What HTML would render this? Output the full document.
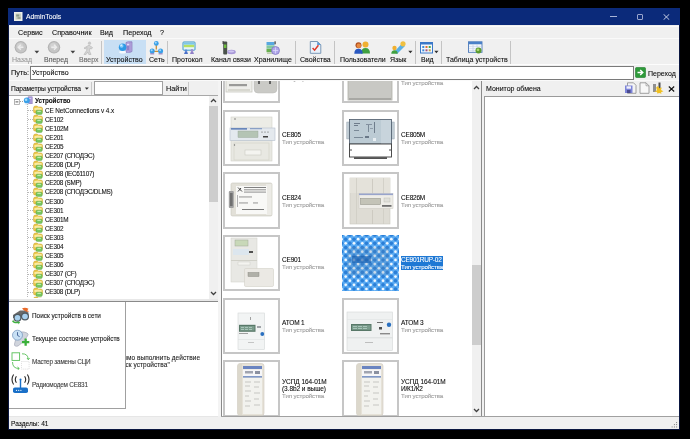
<!DOCTYPE html>
<html><head><meta charset="utf-8">
<style>
*{box-sizing:border-box}
html,body{margin:0;padding:0;width:690px;height:439px;overflow:hidden;background:#000;font-family:"Liberation Sans",sans-serif;color:#1a1a1a}
.a{position:absolute;display:block}
.t{position:absolute;white-space:nowrap;will-change:transform;-webkit-text-stroke:0.08px currentColor}
</style></head><body>
<div class="a" style="left:8px;top:8px;width:672px;height:422px;background:#0a1640;"></div>
<div class="a" style="left:8px;top:8px;width:672px;height:17px;background:#0b2a7a;"></div>
<div class="a" style="left:9px;top:25px;width:670px;height:404px;background:#f0f0f0;"></div>
<svg class="a" style="left:14px;top:12px" width="9" height="9" viewBox="0 0 9 9"><rect x="0" y="0" width="8.5" height="9" fill="#eef0ea"/><rect x="1.5" y="1.5" width="5.5" height="6" fill="#c8d0c0"/><rect x="2.2" y="2.5" width="3" height="2" fill="#8a9a88"/><rect x="3.5" y="5" width="3" height="2" fill="#a0a898"/></svg>
<div class="t" style="left:25.8px;top:14.14px;font-size:6.8px;line-height:6.8px;color:#ffffff;">AdminTools</div>
<div class="a" style="left:610px;top:16px;width:7px;height:1px;background:#a8b4d8;"></div>
<div class="a" style="left:636px;top:13px;width:7px;height:7px;border:1px solid #98a4cc;border-radius:1px;width:6px;height:6px;left:636.5px;top:13.5px"></div>
<svg class="a" style="left:662.5px;top:13.5px" width="7" height="6" viewBox="0 0 7 6"><path d="M0.5 0.2L6.3 5.8M6.3 0.2L0.5 5.8" stroke="#d8def0" stroke-width="0.9"/></svg>
<div class="a" style="left:9px;top:26px;width:670px;height:1px;background:#fbfbfb;"></div>
<div class="t" style="left:17.6px;top:28.91px;font-size:7.2px;line-height:7.2px;color:#080808;">Сервис</div>
<div class="t" style="left:51.5px;top:28.91px;font-size:7.2px;line-height:7.2px;color:#080808;">Справочник</div>
<div class="t" style="left:100.4px;top:28.91px;font-size:7.2px;line-height:7.2px;color:#080808;">Вид</div>
<div class="t" style="left:122.5px;top:28.91px;font-size:7.2px;line-height:7.2px;color:#080808;">Переход</div>
<div class="t" style="left:160.3px;top:28.91px;font-size:7.2px;line-height:7.2px;color:#080808;">?</div>
<div class="a" style="left:9px;top:38px;width:670px;height:1px;background:#fafafa;"></div>
<div class="a" style="left:9px;top:64px;width:670px;height:1px;background:#fdfdfd;"></div>
<div class="a" style="left:104px;top:40px;width:42px;height:24px;background:#c8dff4;"></div>
<div class="a" style="left:101px;top:41px;width:1px;height:23px;background:#c4c4c4;"></div>
<div class="a" style="left:167px;top:41px;width:1px;height:23px;background:#c4c4c4;"></div>
<div class="a" style="left:295px;top:41px;width:1px;height:23px;background:#c4c4c4;"></div>
<div class="a" style="left:334px;top:41px;width:1px;height:23px;background:#c4c4c4;"></div>
<div class="a" style="left:415px;top:41px;width:1px;height:23px;background:#c4c4c4;"></div>
<div class="a" style="left:441px;top:41px;width:1px;height:23px;background:#c4c4c4;"></div>
<div class="a" style="left:510px;top:41px;width:1px;height:23px;background:#c4c4c4;"></div>
<div class="t" style="left:12.4px;top:55.87px;font-size:7.0px;line-height:7.0px;color:#9a9a9a;">Назад</div>
<div class="t" style="left:43.8px;top:55.87px;font-size:7.0px;line-height:7.0px;color:#5a5a5a;">Вперед</div>
<div class="t" style="left:78.6px;top:55.87px;font-size:7.0px;line-height:7.0px;color:#6a6a6a;">Вверх</div>
<div class="t" style="left:106.1px;top:55.87px;font-size:7.0px;line-height:7.0px;color:#0a0a0a;">Устройство</div>
<div class="t" style="left:148.8px;top:55.87px;font-size:7.0px;line-height:7.0px;color:#0a0a0a;">Сеть</div>
<div class="t" style="left:172.4px;top:55.87px;font-size:7.0px;line-height:7.0px;color:#0a0a0a;">Протокол</div>
<div class="t" style="left:210.5px;top:55.87px;font-size:7.0px;line-height:7.0px;color:#0a0a0a;">Канал связи</div>
<div class="t" style="left:253.5px;top:55.87px;font-size:7.0px;line-height:7.0px;color:#0a0a0a;">Хранилище</div>
<div class="t" style="left:300.3px;top:55.87px;font-size:7.0px;line-height:7.0px;color:#0a0a0a;">Свойства</div>
<div class="t" style="left:339.5px;top:55.87px;font-size:7.0px;line-height:7.0px;color:#0a0a0a;">Пользователи</div>
<div class="t" style="left:389.6px;top:55.87px;font-size:7.0px;line-height:7.0px;color:#0a0a0a;">Язык</div>
<div class="t" style="left:420.8px;top:55.87px;font-size:7.0px;line-height:7.0px;color:#0a0a0a;">Вид</div>
<div class="t" style="left:446.3px;top:55.87px;font-size:7.0px;line-height:7.0px;color:#0a0a0a;">Таблица устройств</div>
<svg class="a" style="left:14px;top:41px" width="14" height="13" viewBox="0 0 14 13"><circle cx="6.8" cy="6.3" r="6.2" fill="#b2b2b2"/><circle cx="6.8" cy="6.3" r="5.2" fill="#c6c6c6"/><circle cx="6" cy="5" r="3" fill="#d2d2d2"/><path d="M9.5 6.3H4.5M6.8 3.8L4.3 6.3L6.8 8.8" stroke="#ececec" stroke-width="1.4" fill="none"/></svg>
<svg class="a" style="left:47px;top:41px" width="14" height="13" viewBox="0 0 14 13"><circle cx="7" cy="6.3" r="6.2" fill="#b2b2b2"/><circle cx="7" cy="6.3" r="5.2" fill="#c6c6c6"/><circle cx="6.2" cy="5" r="3" fill="#d2d2d2"/><path d="M4.3 6.3H9.3M7 3.8L9.5 6.3L7 8.8" stroke="#ececec" stroke-width="1.4" fill="none"/></svg>
<svg class="a" style="left:34px;top:50px" width="6" height="4" viewBox="0 0 6 4"><path d="M0.5 0.8H5.2L2.85 3.4Z" fill="#404040"/></svg>
<svg class="a" style="left:70px;top:50px" width="6" height="4" viewBox="0 0 6 4"><path d="M0.5 0.8H5.2L2.85 3.4Z" fill="#404040"/></svg>
<svg class="a" style="left:82px;top:41px" width="12" height="14" viewBox="0 0 12 14"><circle cx="7.5" cy="2.2" r="1.6" fill="#c8c8c8"/><path d="M7 4.2L10.5 6.5L9.5 8L8 7.2L7.5 10L9 13.5H6.8L5.8 11L4 13.5H2L4.6 9.5L5 6.5L3 8L2 7Z" fill="#d4d4d4" stroke="#b4b4b4" stroke-width="0.6"/></svg>
<svg class="a" style="left:118px;top:41px" width="16" height="14" viewBox="0 0 16 14"><path d="M8 1.5L10 0.8H14V10.5L12 11.3H8Z" fill="#b8a8e0" stroke="#7a6ab0" stroke-width="0.6"/><path d="M12 0.8V11.3" stroke="#8a7ac0" stroke-width="0.5"/><rect x="9" y="3" width="2.2" height="0.9" fill="#e8e0fa"/><rect x="9" y="5" width="2.2" height="4.5" fill="#9080c8"/><ellipse cx="4.6" cy="11.2" rx="3.4" ry="1.4" fill="#f4f8fc"/><circle cx="4.6" cy="6.2" r="3.8" fill="#2e9ae6"/><circle cx="3.6" cy="4.8" r="1.9" fill="#8cd0fa"/><circle cx="3.2" cy="4.3" r="0.8" fill="#e8f6ff"/></svg>
<svg class="a" style="left:149px;top:40px" width="15" height="15" viewBox="0 0 15 15"><path d="M7.3 4V9.5M3 11.3H11.8" stroke="#c89038" stroke-width="1.3"/><circle cx="7.3" cy="3.4" r="2.4" fill="#3aa0e8"/><circle cx="6.8" cy="2.8" r="1" fill="#a0d8fa"/><circle cx="3.2" cy="11" r="2.5" fill="#3aa0e8"/><circle cx="2.7" cy="10.3" r="1" fill="#a0d8fa"/><circle cx="11.6" cy="11" r="2.5" fill="#3aa0e8"/><circle cx="11.1" cy="10.3" r="1" fill="#a0d8fa"/><rect x="1.2" y="13.2" width="4" height="1.2" fill="#9080c0"/><rect x="9.6" y="13.2" width="4" height="1.2" fill="#9080c0"/></svg>
<svg class="a" style="left:182px;top:41px" width="14" height="13" viewBox="0 0 14 13"><rect x="1" y="1" width="12" height="8.2" rx="0.8" fill="#e6f4f8" stroke="#3a98c8" stroke-width="1"/><rect x="1.8" y="3.6" width="10.4" height="2.6" fill="#b8e060"/><rect x="1.8" y="1.8" width="10.4" height="1.8" fill="#7cc8e8"/><circle cx="4" cy="9.8" r="1.3" fill="#5a88d8"/><path d="M2 13L3 10.8H5.2L6 13Z" fill="#4a70c8"/><circle cx="10" cy="9.2" r="1.3" fill="#a090d0"/><path d="M8 13L9 10.3H11L12 13Z" fill="#9080c8"/></svg>
<svg class="a" style="left:222px;top:41px" width="14" height="14" viewBox="0 0 14 14"><rect x="1.2" y="0.4" width="4" height="13" rx="1" fill="#4a524a"/><rect x="0.6" y="0" width="1" height="3" fill="#303030"/><rect x="2" y="3.5" width="2.4" height="3.5" fill="#70c040"/><ellipse cx="9.5" cy="11" rx="4.3" ry="2.2" fill="#a898d8"/><ellipse cx="9.2" cy="10.5" rx="3" ry="1.1" fill="#d0c8f0"/></svg>
<svg class="a" style="left:266px;top:41px" width="14" height="14" viewBox="0 0 14 14"><rect x="0.5" y="1" width="8" height="3.2" fill="#58a8e0"/><rect x="0.5" y="4.4" width="8" height="3.2" fill="#80c8a0"/><rect x="0.5" y="7.8" width="8" height="3.4" fill="#6ab050"/><rect x="1" y="11.4" width="7" height="1.6" fill="#c0d0b0"/><circle cx="9.5" cy="9.5" r="4" fill="#b0a8e8" stroke="#7c70c0" stroke-width="0.7"/><path d="M9.5 6.5V12.5M7 9.5H12" stroke="#e4e0ff" stroke-width="0.7"/><rect x="8.5" y="0.3" width="1.2" height="3" fill="#404040"/></svg>
<svg class="a" style="left:309px;top:41px" width="13" height="13" viewBox="0 0 13 13"><path d="M1.3 0.5H8.5L11.8 3.8V12.3H1.3Z" fill="#eaf2fb" stroke="#6e8eb0" stroke-width="0.9"/><path d="M8.2 0.5V4.1H11.8Z" fill="#5a9ad8"/><path d="M3.6 7L5.6 9.2L9.4 4.2" stroke="#e03a2a" stroke-width="1.5" fill="none"/></svg>
<svg class="a" style="left:354px;top:41px" width="16" height="13" viewBox="0 0 16 13"><circle cx="11.5" cy="3.5" r="3" fill="#f0b030"/><path d="M7 12.5Q7 7 11.5 7Q16 7 16 12.5Z" fill="#40a040"/><circle cx="4.5" cy="4.2" r="3" fill="#b05020"/><circle cx="4.8" cy="4.8" r="2.2" fill="#e88a40"/><path d="M0.3 12.8Q0.3 7.8 4.5 7.8Q8.7 7.8 8.7 12.8Z" fill="#2a58c0"/></svg>
<svg class="a" style="left:391px;top:41px" width="15" height="13" viewBox="0 0 15 13"><path d="M3 11L11 2.5L14 5L6 13Z" fill="#58b0e8"/><circle cx="12" cy="2.8" r="2.6" fill="#f0c040"/><circle cx="3.5" cy="7" r="2.2" fill="#f0b030"/><path d="M0.3 12.8Q0.3 9.2 3.5 9.2Q6.7 9.2 6.7 12.8Z" fill="#40a040"/></svg>
<svg class="a" style="left:408px;top:50px" width="5" height="4" viewBox="0 0 5 4"><path d="M0.3 0.8H4.5L2.4 3.2Z" fill="#303030"/></svg>
<svg class="a" style="left:420px;top:42px" width="13" height="12" viewBox="0 0 13 12"><rect x="0.5" y="0.5" width="12" height="10.5" fill="#f4f8fc" stroke="#3a78c8" stroke-width="1"/><rect x="0.5" y="0.5" width="12" height="2" fill="#3a78c8"/><rect x="2.3" y="4" width="2" height="2" fill="#3a8ad8"/><rect x="5.5" y="4" width="2" height="2" fill="#e07030"/><rect x="8.7" y="4" width="2" height="2" fill="#40a848"/><rect x="2.3" y="7.3" width="2" height="2" fill="#3a8ad8"/><rect x="5.5" y="7.3" width="2" height="2" fill="#a05080"/><rect x="8.7" y="7.3" width="2" height="2" fill="#c0a040"/></svg>
<svg class="a" style="left:434px;top:50px" width="5" height="4" viewBox="0 0 5 4"><path d="M0.3 0.8H4.5L2.4 3.2Z" fill="#303030"/></svg>
<svg class="a" style="left:468px;top:41px" width="15" height="13" viewBox="0 0 15 13"><rect x="0.5" y="0.8" width="13.5" height="10.5" fill="#fafcff" stroke="#4a78b8" stroke-width="0.9"/><rect x="0.5" y="0.8" width="13.5" height="2.5" fill="#4a80c8"/><path d="M1 5.3H13.5M1 7.3H13.5M1 9.3H13.5M5 3.3V11M9 3.3V11" stroke="#b8c8e0" stroke-width="0.6"/><circle cx="10.5" cy="9.5" r="3" fill="#5a9a30"/><circle cx="10" cy="8.8" r="1.4" fill="#b0d870"/></svg>
<div class="t" style="left:10.9px;top:68.72px;font-size:7.3px;line-height:7.3px;color:#080808;">Путь:</div>
<div class="a" style="left:30px;top:66px;width:604px;height:14px;background:#fff;border:1px solid #7a7a7a"></div>
<div class="t" style="left:32.2px;top:69.07px;font-size:7.0px;line-height:7.0px;color:#080808;">Устройство</div>
<svg class="a" style="left:635px;top:67px" width="11" height="11" viewBox="0 0 11 11"><rect x="0.5" y="0.5" width="10" height="10" rx="1" fill="#2e9a3a" stroke="#1e7a2a" stroke-width="0.6"/><path d="M2.5 5.5H7.5M5.2 3L7.8 5.5L5.2 8" stroke="#fff" stroke-width="1.4" fill="none"/></svg>
<div class="t" style="left:648.2px;top:69.57px;font-size:7.0px;line-height:7.0px;color:#080808;">Переход</div>
<div class="a" style="left:9px;top:80px;width:670px;height:1px;background:#fafafa;"></div>
<div class="a" style="left:9px;top:81px;width:210px;height:14px;background:#f0f0f0;"></div>
<div class="a" style="left:9px;top:95px;width:210px;height:1px;background:#a8a8a8;"></div>
<div class="t" style="left:11.4px;top:85.93px;font-size:6.7px;line-height:6.7px;color:#080808;letter-spacing:-0.1px">Параметры устройства</div>
<svg class="a" style="left:84px;top:87px" width="6" height="4" viewBox="0 0 6 4"><path d="M0.8 0.6H4.8L2.8 2.8Z" fill="#303030"/></svg>
<div class="a" style="left:91px;top:82px;width:1px;height:13px;background:#c8c8c8;"></div>
<div class="a" style="left:94px;top:81px;width:69px;height:14px;background:#fff;border:1px solid #a0a0a0"></div>
<div class="t" style="left:165.6px;top:85.12px;font-size:7.3px;line-height:7.3px;color:#080808;">Найти</div>
<div class="a" style="left:188px;top:82px;width:1px;height:13px;background:#c8c8c8;"></div>
<div class="a" style="left:9px;top:96px;width:209px;height:204px;background:#ffffff;"></div>
<div class="a" style="left:209px;top:96px;width:9px;height:204px;background:#f0f0f0;"></div>
<div class="a" style="left:209px;top:106px;width:9px;height:96px;background:#cdcdcd;"></div>
<svg class="a" style="left:210px;top:98px" width="7" height="5" viewBox="0 0 7 5"><path d="M1 4L3.5 1.5L6 4" stroke="#404040" stroke-width="1.25" fill="none"/></svg>
<svg class="a" style="left:210px;top:291px" width="7" height="5" viewBox="0 0 7 5"><path d="M1 1L3.5 3.5L6 1" stroke="#404040" stroke-width="1.25" fill="none"/></svg>
<div class="a" style="left:9px;top:299px;width:209px;height:2px;background:#e8e8e8;"></div>
<div class="a" style="left:9px;top:301px;width:209px;height:1px;background:#8a8a8a;"></div>
<div class="a" style="left:9px;top:302px;width:209px;height:114px;background:#ffffff;"></div>
<div class="a" style="left:218px;top:81px;width:3px;height:335px;background:#f4f4f4;"></div>
<div class="a" style="left:221px;top:81px;width:1px;height:335px;background:#8a8a8a;"></div>
<div class="a" style="left:9px;top:96px;width:200px;height:202px;overflow:hidden">
<svg class="a" style="left:5px;top:2.5px" width="6" height="6"><rect x="0.45" y="0.45" width="4.9" height="4.9" fill="#fff" stroke="#a0a0a0" stroke-width="0.8"/><path d="M1.5 2.9H4.3" stroke="#303030" stroke-width="0.8"/></svg>
<div class="a" style="left:10.5px;top:5px;width:3px;height:1px;border-top:1px dotted #a0a0a0"></div>
<svg class="a" style="left:14px;top:0px" width="10" height="9"><rect x="5" y="0.8" width="4.2" height="7" fill="#a898d8" stroke="#7a6ab0" stroke-width="0.4"/><rect x="6" y="2" width="2.2" height="0.8" fill="#e0d8f8"/><circle cx="3.8" cy="4.6" r="3" fill="#3aa0e8"/><circle cx="3.1" cy="3.7" r="1.3" fill="#a8dcfa"/><ellipse cx="3.8" cy="8.1" rx="2.4" ry="0.8" fill="#d8e8f4"/></svg>
<div class="t" style="left:25.60px;top:2.08px;font-size:6.4px;line-height:6.4px;color:#101010;font-weight:bold;letter-spacing:-0.1px">Устройство</div>
<div class="a" style="left:18px;top:8px;width:1px;height:200px;background:repeating-linear-gradient(#b8b8b8 0 1px,transparent 1px 2px)"></div>
<div class="a" style="left:19px;top:14px;width:5px;height:1px;background:repeating-linear-gradient(90deg,#b8b8b8 0 1px,transparent 1px 2px)"></div>
<svg class="a" style="left:24px;top:9.30px" width="10" height="10"><path d="M0.5 3Q0.5 1 2.5 1H4.2L5.2 2H7.8Q9.6 2 9.6 4V6.5Q9.6 8 8 8H2Q0.5 8 0.5 6.5Z" fill="#ecc848" stroke="#c8a030" stroke-width="0.5"/><ellipse cx="5" cy="4" rx="3.8" ry="1.5" fill="#faeaa0"/><path d="M3 6.2Q3 5.2 4 5.2H8.2Q9.2 5.2 9.2 6.2V8.2Q9.2 9.4 8 9.4H4.2Q3 9.4 3 8.2Z" fill="#78c860" stroke="#58a040" stroke-width="0.4"/><ellipse cx="6.1" cy="6.4" rx="2" ry="0.7" fill="#c0ecb0"/></svg>
<div class="t" style="left:36.10px;top:11.68px;font-size:6.4px;line-height:6.4px;color:#101010;letter-spacing:-0.1px">CE NetConnections v 4.x</div>
<div class="a" style="left:19px;top:23px;width:5px;height:1px;background:repeating-linear-gradient(90deg,#b8b8b8 0 1px,transparent 1px 2px)"></div>
<svg class="a" style="left:24px;top:18.38px" width="10" height="10"><path d="M0.5 3Q0.5 1 2.5 1H4.2L5.2 2H7.8Q9.6 2 9.6 4V6.5Q9.6 8 8 8H2Q0.5 8 0.5 6.5Z" fill="#ecc848" stroke="#c8a030" stroke-width="0.5"/><ellipse cx="5" cy="4" rx="3.8" ry="1.5" fill="#faeaa0"/><path d="M3 6.2Q3 5.2 4 5.2H8.2Q9.2 5.2 9.2 6.2V8.2Q9.2 9.4 8 9.4H4.2Q3 9.4 3 8.2Z" fill="#78c860" stroke="#58a040" stroke-width="0.4"/><ellipse cx="6.1" cy="6.4" rx="2" ry="0.7" fill="#c0ecb0"/></svg>
<div class="t" style="left:36.10px;top:20.77px;font-size:6.4px;line-height:6.4px;color:#101010;letter-spacing:-0.25px">CE102</div>
<div class="a" style="left:19px;top:32px;width:5px;height:1px;background:repeating-linear-gradient(90deg,#b8b8b8 0 1px,transparent 1px 2px)"></div>
<svg class="a" style="left:24px;top:27.47px" width="10" height="10"><path d="M0.5 3Q0.5 1 2.5 1H4.2L5.2 2H7.8Q9.6 2 9.6 4V6.5Q9.6 8 8 8H2Q0.5 8 0.5 6.5Z" fill="#ecc848" stroke="#c8a030" stroke-width="0.5"/><ellipse cx="5" cy="4" rx="3.8" ry="1.5" fill="#faeaa0"/><path d="M3 6.2Q3 5.2 4 5.2H8.2Q9.2 5.2 9.2 6.2V8.2Q9.2 9.4 8 9.4H4.2Q3 9.4 3 8.2Z" fill="#78c860" stroke="#58a040" stroke-width="0.4"/><ellipse cx="6.1" cy="6.4" rx="2" ry="0.7" fill="#c0ecb0"/></svg>
<div class="t" style="left:36.10px;top:29.85px;font-size:6.4px;line-height:6.4px;color:#101010;letter-spacing:-0.25px">CE102M</div>
<div class="a" style="left:19px;top:42px;width:5px;height:1px;background:repeating-linear-gradient(90deg,#b8b8b8 0 1px,transparent 1px 2px)"></div>
<svg class="a" style="left:24px;top:36.56px" width="10" height="10"><path d="M0.5 3Q0.5 1 2.5 1H4.2L5.2 2H7.8Q9.6 2 9.6 4V6.5Q9.6 8 8 8H2Q0.5 8 0.5 6.5Z" fill="#ecc848" stroke="#c8a030" stroke-width="0.5"/><ellipse cx="5" cy="4" rx="3.8" ry="1.5" fill="#faeaa0"/><path d="M3 6.2Q3 5.2 4 5.2H8.2Q9.2 5.2 9.2 6.2V8.2Q9.2 9.4 8 9.4H4.2Q3 9.4 3 8.2Z" fill="#78c860" stroke="#58a040" stroke-width="0.4"/><ellipse cx="6.1" cy="6.4" rx="2" ry="0.7" fill="#c0ecb0"/></svg>
<div class="t" style="left:36.10px;top:38.94px;font-size:6.4px;line-height:6.4px;color:#101010;letter-spacing:-0.25px">CE201</div>
<div class="a" style="left:19px;top:51px;width:5px;height:1px;background:repeating-linear-gradient(90deg,#b8b8b8 0 1px,transparent 1px 2px)"></div>
<svg class="a" style="left:24px;top:45.64px" width="10" height="10"><path d="M0.5 3Q0.5 1 2.5 1H4.2L5.2 2H7.8Q9.6 2 9.6 4V6.5Q9.6 8 8 8H2Q0.5 8 0.5 6.5Z" fill="#ecc848" stroke="#c8a030" stroke-width="0.5"/><ellipse cx="5" cy="4" rx="3.8" ry="1.5" fill="#faeaa0"/><path d="M3 6.2Q3 5.2 4 5.2H8.2Q9.2 5.2 9.2 6.2V8.2Q9.2 9.4 8 9.4H4.2Q3 9.4 3 8.2Z" fill="#78c860" stroke="#58a040" stroke-width="0.4"/><ellipse cx="6.1" cy="6.4" rx="2" ry="0.7" fill="#c0ecb0"/></svg>
<div class="t" style="left:36.10px;top:48.02px;font-size:6.4px;line-height:6.4px;color:#101010;letter-spacing:-0.25px">CE205</div>
<div class="a" style="left:19px;top:60px;width:5px;height:1px;background:repeating-linear-gradient(90deg,#b8b8b8 0 1px,transparent 1px 2px)"></div>
<svg class="a" style="left:24px;top:54.72px" width="10" height="10"><path d="M0.5 3Q0.5 1 2.5 1H4.2L5.2 2H7.8Q9.6 2 9.6 4V6.5Q9.6 8 8 8H2Q0.5 8 0.5 6.5Z" fill="#ecc848" stroke="#c8a030" stroke-width="0.5"/><ellipse cx="5" cy="4" rx="3.8" ry="1.5" fill="#faeaa0"/><path d="M3 6.2Q3 5.2 4 5.2H8.2Q9.2 5.2 9.2 6.2V8.2Q9.2 9.4 8 9.4H4.2Q3 9.4 3 8.2Z" fill="#78c860" stroke="#58a040" stroke-width="0.4"/><ellipse cx="6.1" cy="6.4" rx="2" ry="0.7" fill="#c0ecb0"/></svg>
<div class="t" style="left:36.10px;top:57.11px;font-size:6.4px;line-height:6.4px;color:#101010;letter-spacing:-0.28px">CE207 (СПОДЭС)</div>
<div class="a" style="left:19px;top:69px;width:5px;height:1px;background:repeating-linear-gradient(90deg,#b8b8b8 0 1px,transparent 1px 2px)"></div>
<svg class="a" style="left:24px;top:63.81px" width="10" height="10"><path d="M0.5 3Q0.5 1 2.5 1H4.2L5.2 2H7.8Q9.6 2 9.6 4V6.5Q9.6 8 8 8H2Q0.5 8 0.5 6.5Z" fill="#ecc848" stroke="#c8a030" stroke-width="0.5"/><ellipse cx="5" cy="4" rx="3.8" ry="1.5" fill="#faeaa0"/><path d="M3 6.2Q3 5.2 4 5.2H8.2Q9.2 5.2 9.2 6.2V8.2Q9.2 9.4 8 9.4H4.2Q3 9.4 3 8.2Z" fill="#78c860" stroke="#58a040" stroke-width="0.4"/><ellipse cx="6.1" cy="6.4" rx="2" ry="0.7" fill="#c0ecb0"/></svg>
<div class="t" style="left:36.10px;top:66.19px;font-size:6.4px;line-height:6.4px;color:#101010;letter-spacing:-0.28px">CE208 (DLP)</div>
<div class="a" style="left:19px;top:78px;width:5px;height:1px;background:repeating-linear-gradient(90deg,#b8b8b8 0 1px,transparent 1px 2px)"></div>
<svg class="a" style="left:24px;top:72.90px" width="10" height="10"><path d="M0.5 3Q0.5 1 2.5 1H4.2L5.2 2H7.8Q9.6 2 9.6 4V6.5Q9.6 8 8 8H2Q0.5 8 0.5 6.5Z" fill="#ecc848" stroke="#c8a030" stroke-width="0.5"/><ellipse cx="5" cy="4" rx="3.8" ry="1.5" fill="#faeaa0"/><path d="M3 6.2Q3 5.2 4 5.2H8.2Q9.2 5.2 9.2 6.2V8.2Q9.2 9.4 8 9.4H4.2Q3 9.4 3 8.2Z" fill="#78c860" stroke="#58a040" stroke-width="0.4"/><ellipse cx="6.1" cy="6.4" rx="2" ry="0.7" fill="#c0ecb0"/></svg>
<div class="t" style="left:36.10px;top:75.28px;font-size:6.4px;line-height:6.4px;color:#101010;letter-spacing:-0.28px">CE208 (IEC61107)</div>
<div class="a" style="left:19px;top:87px;width:5px;height:1px;background:repeating-linear-gradient(90deg,#b8b8b8 0 1px,transparent 1px 2px)"></div>
<svg class="a" style="left:24px;top:81.98px" width="10" height="10"><path d="M0.5 3Q0.5 1 2.5 1H4.2L5.2 2H7.8Q9.6 2 9.6 4V6.5Q9.6 8 8 8H2Q0.5 8 0.5 6.5Z" fill="#ecc848" stroke="#c8a030" stroke-width="0.5"/><ellipse cx="5" cy="4" rx="3.8" ry="1.5" fill="#faeaa0"/><path d="M3 6.2Q3 5.2 4 5.2H8.2Q9.2 5.2 9.2 6.2V8.2Q9.2 9.4 8 9.4H4.2Q3 9.4 3 8.2Z" fill="#78c860" stroke="#58a040" stroke-width="0.4"/><ellipse cx="6.1" cy="6.4" rx="2" ry="0.7" fill="#c0ecb0"/></svg>
<div class="t" style="left:36.10px;top:84.36px;font-size:6.4px;line-height:6.4px;color:#101010;letter-spacing:-0.28px">CE208 (SMP)</div>
<div class="a" style="left:19px;top:96px;width:5px;height:1px;background:repeating-linear-gradient(90deg,#b8b8b8 0 1px,transparent 1px 2px)"></div>
<svg class="a" style="left:24px;top:91.06px" width="10" height="10"><path d="M0.5 3Q0.5 1 2.5 1H4.2L5.2 2H7.8Q9.6 2 9.6 4V6.5Q9.6 8 8 8H2Q0.5 8 0.5 6.5Z" fill="#ecc848" stroke="#c8a030" stroke-width="0.5"/><ellipse cx="5" cy="4" rx="3.8" ry="1.5" fill="#faeaa0"/><path d="M3 6.2Q3 5.2 4 5.2H8.2Q9.2 5.2 9.2 6.2V8.2Q9.2 9.4 8 9.4H4.2Q3 9.4 3 8.2Z" fill="#78c860" stroke="#58a040" stroke-width="0.4"/><ellipse cx="6.1" cy="6.4" rx="2" ry="0.7" fill="#c0ecb0"/></svg>
<div class="t" style="left:36.10px;top:93.45px;font-size:6.4px;line-height:6.4px;color:#101010;letter-spacing:-0.28px">CE208 (СПОДЭС/DLMS)</div>
<div class="a" style="left:19px;top:105px;width:5px;height:1px;background:repeating-linear-gradient(90deg,#b8b8b8 0 1px,transparent 1px 2px)"></div>
<svg class="a" style="left:24px;top:100.15px" width="10" height="10"><path d="M0.5 3Q0.5 1 2.5 1H4.2L5.2 2H7.8Q9.6 2 9.6 4V6.5Q9.6 8 8 8H2Q0.5 8 0.5 6.5Z" fill="#ecc848" stroke="#c8a030" stroke-width="0.5"/><ellipse cx="5" cy="4" rx="3.8" ry="1.5" fill="#faeaa0"/><path d="M3 6.2Q3 5.2 4 5.2H8.2Q9.2 5.2 9.2 6.2V8.2Q9.2 9.4 8 9.4H4.2Q3 9.4 3 8.2Z" fill="#78c860" stroke="#58a040" stroke-width="0.4"/><ellipse cx="6.1" cy="6.4" rx="2" ry="0.7" fill="#c0ecb0"/></svg>
<div class="t" style="left:36.10px;top:102.53px;font-size:6.4px;line-height:6.4px;color:#101010;letter-spacing:-0.25px">CE300</div>
<div class="a" style="left:19px;top:114px;width:5px;height:1px;background:repeating-linear-gradient(90deg,#b8b8b8 0 1px,transparent 1px 2px)"></div>
<svg class="a" style="left:24px;top:109.24px" width="10" height="10"><path d="M0.5 3Q0.5 1 2.5 1H4.2L5.2 2H7.8Q9.6 2 9.6 4V6.5Q9.6 8 8 8H2Q0.5 8 0.5 6.5Z" fill="#ecc848" stroke="#c8a030" stroke-width="0.5"/><ellipse cx="5" cy="4" rx="3.8" ry="1.5" fill="#faeaa0"/><path d="M3 6.2Q3 5.2 4 5.2H8.2Q9.2 5.2 9.2 6.2V8.2Q9.2 9.4 8 9.4H4.2Q3 9.4 3 8.2Z" fill="#78c860" stroke="#58a040" stroke-width="0.4"/><ellipse cx="6.1" cy="6.4" rx="2" ry="0.7" fill="#c0ecb0"/></svg>
<div class="t" style="left:36.10px;top:111.62px;font-size:6.4px;line-height:6.4px;color:#101010;letter-spacing:-0.25px">CE301</div>
<div class="a" style="left:19px;top:123px;width:5px;height:1px;background:repeating-linear-gradient(90deg,#b8b8b8 0 1px,transparent 1px 2px)"></div>
<svg class="a" style="left:24px;top:118.32px" width="10" height="10"><path d="M0.5 3Q0.5 1 2.5 1H4.2L5.2 2H7.8Q9.6 2 9.6 4V6.5Q9.6 8 8 8H2Q0.5 8 0.5 6.5Z" fill="#ecc848" stroke="#c8a030" stroke-width="0.5"/><ellipse cx="5" cy="4" rx="3.8" ry="1.5" fill="#faeaa0"/><path d="M3 6.2Q3 5.2 4 5.2H8.2Q9.2 5.2 9.2 6.2V8.2Q9.2 9.4 8 9.4H4.2Q3 9.4 3 8.2Z" fill="#78c860" stroke="#58a040" stroke-width="0.4"/><ellipse cx="6.1" cy="6.4" rx="2" ry="0.7" fill="#c0ecb0"/></svg>
<div class="t" style="left:36.10px;top:120.70px;font-size:6.4px;line-height:6.4px;color:#101010;letter-spacing:-0.25px">CE301M</div>
<div class="a" style="left:19px;top:132px;width:5px;height:1px;background:repeating-linear-gradient(90deg,#b8b8b8 0 1px,transparent 1px 2px)"></div>
<svg class="a" style="left:24px;top:127.41px" width="10" height="10"><path d="M0.5 3Q0.5 1 2.5 1H4.2L5.2 2H7.8Q9.6 2 9.6 4V6.5Q9.6 8 8 8H2Q0.5 8 0.5 6.5Z" fill="#ecc848" stroke="#c8a030" stroke-width="0.5"/><ellipse cx="5" cy="4" rx="3.8" ry="1.5" fill="#faeaa0"/><path d="M3 6.2Q3 5.2 4 5.2H8.2Q9.2 5.2 9.2 6.2V8.2Q9.2 9.4 8 9.4H4.2Q3 9.4 3 8.2Z" fill="#78c860" stroke="#58a040" stroke-width="0.4"/><ellipse cx="6.1" cy="6.4" rx="2" ry="0.7" fill="#c0ecb0"/></svg>
<div class="t" style="left:36.10px;top:129.79px;font-size:6.4px;line-height:6.4px;color:#101010;letter-spacing:-0.25px">CE302</div>
<div class="a" style="left:19px;top:141px;width:5px;height:1px;background:repeating-linear-gradient(90deg,#b8b8b8 0 1px,transparent 1px 2px)"></div>
<svg class="a" style="left:24px;top:136.49px" width="10" height="10"><path d="M0.5 3Q0.5 1 2.5 1H4.2L5.2 2H7.8Q9.6 2 9.6 4V6.5Q9.6 8 8 8H2Q0.5 8 0.5 6.5Z" fill="#ecc848" stroke="#c8a030" stroke-width="0.5"/><ellipse cx="5" cy="4" rx="3.8" ry="1.5" fill="#faeaa0"/><path d="M3 6.2Q3 5.2 4 5.2H8.2Q9.2 5.2 9.2 6.2V8.2Q9.2 9.4 8 9.4H4.2Q3 9.4 3 8.2Z" fill="#78c860" stroke="#58a040" stroke-width="0.4"/><ellipse cx="6.1" cy="6.4" rx="2" ry="0.7" fill="#c0ecb0"/></svg>
<div class="t" style="left:36.10px;top:138.87px;font-size:6.4px;line-height:6.4px;color:#101010;letter-spacing:-0.25px">CE303</div>
<div class="a" style="left:19px;top:151px;width:5px;height:1px;background:repeating-linear-gradient(90deg,#b8b8b8 0 1px,transparent 1px 2px)"></div>
<svg class="a" style="left:24px;top:145.57px" width="10" height="10"><path d="M0.5 3Q0.5 1 2.5 1H4.2L5.2 2H7.8Q9.6 2 9.6 4V6.5Q9.6 8 8 8H2Q0.5 8 0.5 6.5Z" fill="#ecc848" stroke="#c8a030" stroke-width="0.5"/><ellipse cx="5" cy="4" rx="3.8" ry="1.5" fill="#faeaa0"/><path d="M3 6.2Q3 5.2 4 5.2H8.2Q9.2 5.2 9.2 6.2V8.2Q9.2 9.4 8 9.4H4.2Q3 9.4 3 8.2Z" fill="#78c860" stroke="#58a040" stroke-width="0.4"/><ellipse cx="6.1" cy="6.4" rx="2" ry="0.7" fill="#c0ecb0"/></svg>
<div class="t" style="left:36.10px;top:147.96px;font-size:6.4px;line-height:6.4px;color:#101010;letter-spacing:-0.25px">CE304</div>
<div class="a" style="left:19px;top:160px;width:5px;height:1px;background:repeating-linear-gradient(90deg,#b8b8b8 0 1px,transparent 1px 2px)"></div>
<svg class="a" style="left:24px;top:154.66px" width="10" height="10"><path d="M0.5 3Q0.5 1 2.5 1H4.2L5.2 2H7.8Q9.6 2 9.6 4V6.5Q9.6 8 8 8H2Q0.5 8 0.5 6.5Z" fill="#ecc848" stroke="#c8a030" stroke-width="0.5"/><ellipse cx="5" cy="4" rx="3.8" ry="1.5" fill="#faeaa0"/><path d="M3 6.2Q3 5.2 4 5.2H8.2Q9.2 5.2 9.2 6.2V8.2Q9.2 9.4 8 9.4H4.2Q3 9.4 3 8.2Z" fill="#78c860" stroke="#58a040" stroke-width="0.4"/><ellipse cx="6.1" cy="6.4" rx="2" ry="0.7" fill="#c0ecb0"/></svg>
<div class="t" style="left:36.10px;top:157.04px;font-size:6.4px;line-height:6.4px;color:#101010;letter-spacing:-0.25px">CE305</div>
<div class="a" style="left:19px;top:169px;width:5px;height:1px;background:repeating-linear-gradient(90deg,#b8b8b8 0 1px,transparent 1px 2px)"></div>
<svg class="a" style="left:24px;top:163.75px" width="10" height="10"><path d="M0.5 3Q0.5 1 2.5 1H4.2L5.2 2H7.8Q9.6 2 9.6 4V6.5Q9.6 8 8 8H2Q0.5 8 0.5 6.5Z" fill="#ecc848" stroke="#c8a030" stroke-width="0.5"/><ellipse cx="5" cy="4" rx="3.8" ry="1.5" fill="#faeaa0"/><path d="M3 6.2Q3 5.2 4 5.2H8.2Q9.2 5.2 9.2 6.2V8.2Q9.2 9.4 8 9.4H4.2Q3 9.4 3 8.2Z" fill="#78c860" stroke="#58a040" stroke-width="0.4"/><ellipse cx="6.1" cy="6.4" rx="2" ry="0.7" fill="#c0ecb0"/></svg>
<div class="t" style="left:36.10px;top:166.13px;font-size:6.4px;line-height:6.4px;color:#101010;letter-spacing:-0.25px">CE306</div>
<div class="a" style="left:19px;top:178px;width:5px;height:1px;background:repeating-linear-gradient(90deg,#b8b8b8 0 1px,transparent 1px 2px)"></div>
<svg class="a" style="left:24px;top:172.83px" width="10" height="10"><path d="M0.5 3Q0.5 1 2.5 1H4.2L5.2 2H7.8Q9.6 2 9.6 4V6.5Q9.6 8 8 8H2Q0.5 8 0.5 6.5Z" fill="#ecc848" stroke="#c8a030" stroke-width="0.5"/><ellipse cx="5" cy="4" rx="3.8" ry="1.5" fill="#faeaa0"/><path d="M3 6.2Q3 5.2 4 5.2H8.2Q9.2 5.2 9.2 6.2V8.2Q9.2 9.4 8 9.4H4.2Q3 9.4 3 8.2Z" fill="#78c860" stroke="#58a040" stroke-width="0.4"/><ellipse cx="6.1" cy="6.4" rx="2" ry="0.7" fill="#c0ecb0"/></svg>
<div class="t" style="left:36.10px;top:175.21px;font-size:6.4px;line-height:6.4px;color:#101010;letter-spacing:-0.28px">CE307 (CF)</div>
<div class="a" style="left:19px;top:187px;width:5px;height:1px;background:repeating-linear-gradient(90deg,#b8b8b8 0 1px,transparent 1px 2px)"></div>
<svg class="a" style="left:24px;top:181.92px" width="10" height="10"><path d="M0.5 3Q0.5 1 2.5 1H4.2L5.2 2H7.8Q9.6 2 9.6 4V6.5Q9.6 8 8 8H2Q0.5 8 0.5 6.5Z" fill="#ecc848" stroke="#c8a030" stroke-width="0.5"/><ellipse cx="5" cy="4" rx="3.8" ry="1.5" fill="#faeaa0"/><path d="M3 6.2Q3 5.2 4 5.2H8.2Q9.2 5.2 9.2 6.2V8.2Q9.2 9.4 8 9.4H4.2Q3 9.4 3 8.2Z" fill="#78c860" stroke="#58a040" stroke-width="0.4"/><ellipse cx="6.1" cy="6.4" rx="2" ry="0.7" fill="#c0ecb0"/></svg>
<div class="t" style="left:36.10px;top:184.30px;font-size:6.4px;line-height:6.4px;color:#101010;letter-spacing:-0.28px">CE307 (СПОДЭС)</div>
<div class="a" style="left:19px;top:196px;width:5px;height:1px;background:repeating-linear-gradient(90deg,#b8b8b8 0 1px,transparent 1px 2px)"></div>
<svg class="a" style="left:24px;top:191.00px" width="10" height="10"><path d="M0.5 3Q0.5 1 2.5 1H4.2L5.2 2H7.8Q9.6 2 9.6 4V6.5Q9.6 8 8 8H2Q0.5 8 0.5 6.5Z" fill="#ecc848" stroke="#c8a030" stroke-width="0.5"/><ellipse cx="5" cy="4" rx="3.8" ry="1.5" fill="#faeaa0"/><path d="M3 6.2Q3 5.2 4 5.2H8.2Q9.2 5.2 9.2 6.2V8.2Q9.2 9.4 8 9.4H4.2Q3 9.4 3 8.2Z" fill="#78c860" stroke="#58a040" stroke-width="0.4"/><ellipse cx="6.1" cy="6.4" rx="2" ry="0.7" fill="#c0ecb0"/></svg>
<div class="t" style="left:36.10px;top:193.38px;font-size:6.4px;line-height:6.4px;color:#101010;letter-spacing:-0.28px">CE308 (DLP)</div>
<div class="a" style="left:19px;top:205px;width:5px;height:1px;background:repeating-linear-gradient(90deg,#b8b8b8 0 1px,transparent 1px 2px)"></div>
<svg class="a" style="left:24px;top:200.09px" width="10" height="10"><path d="M0.5 3Q0.5 1 2.5 1H4.2L5.2 2H7.8Q9.6 2 9.6 4V6.5Q9.6 8 8 8H2Q0.5 8 0.5 6.5Z" fill="#ecc848" stroke="#c8a030" stroke-width="0.5"/><ellipse cx="5" cy="4" rx="3.8" ry="1.5" fill="#faeaa0"/><path d="M3 6.2Q3 5.2 4 5.2H8.2Q9.2 5.2 9.2 6.2V8.2Q9.2 9.4 8 9.4H4.2Q3 9.4 3 8.2Z" fill="#78c860" stroke="#58a040" stroke-width="0.4"/><ellipse cx="6.1" cy="6.4" rx="2" ry="0.7" fill="#c0ecb0"/></svg>
<div class="t" style="left:36.10px;top:202.47px;font-size:6.4px;line-height:6.4px;color:#101010;letter-spacing:-0.28px">CE308 (СПОДЭС)</div>
</div>
<div class="t" style="right:490.40px;top:354.70px;font-size:6.5px;line-height:6.5px;color:#202020;letter-spacing:0.05px">Необходимо выполнить действие</div>
<div class="t" style="right:520.00px;top:362.10px;font-size:6.5px;line-height:6.5px;color:#202020;letter-spacing:0.05px">"Поиск устройства"</div>
<div class="a" style="left:9px;top:302px;width:117px;height:107px;background:#fff;border-right:1px solid #a0a0a0;border-bottom:1px solid #a0a0a0"></div>
<div class="t" style="left:31.6px;top:313.28px;font-size:6.4px;line-height:6.4px;color:#101010;">Поиск устройств в сети</div>
<div class="t" style="left:31.6px;top:336.18px;font-size:6.4px;line-height:6.4px;color:#101010;letter-spacing:-0.05px">Текущее состояние устройств</div>
<div class="t" style="left:31.6px;top:358.88px;font-size:6.4px;line-height:6.4px;color:#3a3a3a;letter-spacing:-0.22px">Мастер замены СЦИ</div>
<div class="t" style="left:31.6px;top:382.08px;font-size:6.4px;line-height:6.4px;color:#3a3a3a;letter-spacing:-0.22px">Радиомодем CE831</div>
<svg class="a" style="left:11px;top:306px" width="19" height="19" viewBox="0 0 19 19"><path d="M11 2.5Q14 0.8 17.5 2.8L16.2 4.6L18.3 5.2L15 6.3Z" fill="#e86a2a"/><path d="M2 9L9 4.5H13L17.5 6.5V12H2Z" fill="#6a6a6a"/><circle cx="6.5" cy="11.8" r="4" fill="#505a60"/><circle cx="6.5" cy="11.8" r="2.8" fill="#a8d0ee"/><circle cx="14" cy="10.5" r="4" fill="#505a60"/><circle cx="14" cy="10.5" r="2.8" fill="#a8d0ee"/><path d="M1 15Q2 17.8 7.5 17.2L7 18.6L9.2 16.6L6.5 14.8L6.8 16Q3.5 16.5 2.5 14.2Z" fill="#40b040"/></svg>
<svg class="a" style="left:11px;top:329px" width="19" height="19" viewBox="0 0 19 19"><path d="M6 5Q8 2 13 3L16 4Q18 5 16.5 7L12 13L7 17Q3 18 3.5 15Z" fill="#d0d4dc" stroke="#9aa0b0" stroke-width="0.6"/><circle cx="6.5" cy="6.2" r="5" fill="#c8e0f4" stroke="#7a9ac0" stroke-width="0.8"/><path d="M6.5 3.2V6.4L8.6 7.6" stroke="#3a5a90" stroke-width="0.9" fill="none"/><path d="M13.5 9.5H15.8V12H18.3V14.3H15.8V16.8H13.5V14.3H11V12H13.5Z" fill="#3ab03a"/></svg>
<svg class="a" style="left:11px;top:352px" width="19" height="18" viewBox="0 0 19 18"><rect x="1" y="0.8" width="7.6" height="7.6" fill="none" stroke="#58c058" stroke-width="0.9"/><rect x="10.5" y="9.5" width="7.6" height="7.6" fill="none" stroke="#c8c8c8" stroke-width="0.6" stroke-dasharray="1 1"/><path d="M11 1.8Q16.8 1.5 17.3 7.3" stroke="#58c058" stroke-width="0.9" fill="none"/><path d="M16 6L17.3 7.8L18.6 6" stroke="#58c058" stroke-width="0.9" fill="none"/><path d="M1.5 10Q1.5 16.5 8 16.5" stroke="#58c058" stroke-width="0.9" fill="none"/><path d="M6.5 15L8.3 16.5L6.5 18" stroke="#58c058" stroke-width="0.9" fill="none"/></svg>
<svg class="a" style="left:11px;top:373px" width="19" height="21" viewBox="0 0 19 21"><path d="M2.6 1.5Q-0.6 6.5 2.6 11.5M16.4 1.5Q19.6 6.5 16.4 11.5M5.4 3.2Q3.2 6.5 5.4 9.8M13.6 3.2Q15.8 6.5 13.6 9.8" stroke="#2a2a2a" stroke-width="1.1" fill="none"/><circle cx="9.5" cy="6.5" r="1" fill="#1a70c8"/><rect x="8.8" y="6.5" width="1.4" height="8.5" fill="#1a70c8"/><rect x="2" y="14.5" width="15" height="5.5" rx="1.8" fill="#1a70c8"/><circle cx="5.5" cy="17.3" r="0.65" fill="#fff"/><circle cx="7.7" cy="17.3" r="0.65" fill="#fff"/><circle cx="9.9" cy="17.3" r="0.65" fill="#fff"/></svg>
<div class="a" style="left:222px;top:81px;width:250px;height:335px;background:#fff;overflow:hidden">
<div class="a" style="left:1.00px;top:-34.10px;width:57px;height:56.4px;background:#fff;border:2px solid #c6c6c6;"></div>
<div class="t" style="left:60.00px;top:-11.90px;font-size:6.5px;line-height:6.5px;color:#0a0a0a;letter-spacing:-0.2px">CE6850</div>
<div class="t" style="left:60.00px;top:-4.70px;font-size:6.5px;line-height:6.5px;color:#9a9a9a;letter-spacing:-0.1px;font-size:6.15px">Тип устройства</div>
<svg class="a" style="left:3.00px;top:-11.00px" width="54" height="24" viewBox="0 0 54 24"><rect x="1" y="0" width="26" height="22" fill="#eeeeea" stroke="#c8c8c0" stroke-width="0.8"/><rect x="4" y="14" width="18" height="2.2" fill="#9a9a98"/><rect x="3" y="19" width="22" height="2" fill="#d8d8d0"/><path d="M29 0H52V19Q52 23 48 23H33Q29 23 29 19Z" fill="#cacac6" stroke="#b8b8b4" stroke-width="0.5"/><rect x="33" y="11" width="2" height="3" fill="#606060"/><rect x="44" y="11" width="2" height="3" fill="#606060"/></svg>
<div class="a" style="left:120.00px;top:-34.10px;width:57px;height:56.4px;background:#fff;border:2px solid #c6c6c6;"></div>
<div class="t" style="left:179.00px;top:-15.50px;font-size:6.5px;line-height:6.5px;color:#0a0a0a;letter-spacing:-0.2px">CE805M</div>
<div class="t" style="left:179.00px;top:-8.30px;font-size:6.5px;line-height:6.5px;color:#0a0a0a;letter-spacing:-0.2px">2</div>
<div class="t" style="left:179.00px;top:-1.10px;font-size:6.5px;line-height:6.5px;color:#9a9a9a;letter-spacing:-0.1px;font-size:6.15px">Тип устройства</div>
<svg class="a" style="left:125.00px;top:-21.00px" width="46" height="41" viewBox="0 0 46 41"><rect x="1" y="0" width="44" height="40" rx="1" fill="#c8c8c4"/><rect x="1" y="0" width="44" height="40" fill="none" stroke="#b0b0a8" stroke-width="0.8"/><rect x="2" y="38" width="42" height="2" fill="#a8a8a4"/></svg>
<div class="a" style="left:1.00px;top:28.60px;width:57px;height:56.4px;background:#fff;border:2px solid #c6c6c6;"></div>
<div class="t" style="left:60.00px;top:50.80px;font-size:6.5px;line-height:6.5px;color:#0a0a0a;letter-spacing:-0.2px">CE805</div>
<div class="t" style="left:60.00px;top:58.00px;font-size:6.5px;line-height:6.5px;color:#9a9a9a;letter-spacing:-0.1px;font-size:6.15px">Тип устройства</div>
<svg class="a" style="left:7.00px;top:35.00px" width="48" height="46" viewBox="0 0 48 46"><rect x="2" y="1" width="41" height="12" fill="#ecece6" stroke="#d2d2ca" stroke-width="0.6"/><rect x="2" y="24" width="41" height="21" fill="#e8e8e2" stroke="#d0d0c8" stroke-width="0.6"/><rect x="5" y="27" width="35" height="17" fill="none" stroke="#cfcfc6" stroke-width="0.6"/><rect x="16" y="34" width="16" height="5" fill="#f4f4f0" stroke="#c2c2ba" stroke-width="0.5"/><circle cx="6" cy="3" r="0.7" fill="#606060"/><circle cx="5.5" cy="29" r="0.7" fill="#707070"/><rect x="1" y="12" width="45" height="12.5" fill="#e4e9ee" stroke="#b4bece" stroke-width="0.6"/><rect x="2" y="12.3" width="16" height="1.2" fill="#3a62a8"/><rect x="21" y="12.3" width="12" height="0.9" fill="#6a86b8"/><rect x="9" y="15" width="20" height="6.5" fill="#b4c4b4" stroke="#94a494" stroke-width="0.4"/><circle cx="33" cy="16" r="0.6" fill="#505050"/><circle cx="36" cy="16" r="0.6" fill="#505050"/><circle cx="39" cy="16" r="0.6" fill="#505050"/><rect x="34" y="20" width="5" height="1.5" fill="#404040"/></svg>
<div class="a" style="left:120.00px;top:28.60px;width:57px;height:56.4px;background:#fff;border:2px solid #c6c6c6;"></div>
<div class="t" style="left:179.00px;top:50.80px;font-size:6.5px;line-height:6.5px;color:#0a0a0a;letter-spacing:-0.2px">CE805M</div>
<div class="t" style="left:179.00px;top:58.00px;font-size:6.5px;line-height:6.5px;color:#9a9a9a;letter-spacing:-0.1px;font-size:6.15px">Тип устройства</div>
<svg class="a" style="left:124.00px;top:37.00px" width="49" height="42" viewBox="0 0 49 42"><rect x="0.8" y="4" width="3" height="17" fill="#c0ccd4" stroke="#8a98a4" stroke-width="0.4"/><rect x="45.2" y="4" width="3" height="17" fill="#c0ccd4" stroke="#8a98a4" stroke-width="0.4"/><rect x="3.5" y="1.5" width="42" height="24.5" fill="#bccbd4" stroke="#4a5868" stroke-width="0.8"/><rect x="35" y="2" width="10" height="23.5" fill="#c8d4dc"/><rect x="8" y="5" width="6" height="0.8" fill="#5a6878"/><rect x="8" y="7" width="4" height="0.8" fill="#5a6878"/><rect x="8" y="12" width="5" height="0.8" fill="#6a7888"/><rect x="8" y="19" width="9" height="0.8" fill="#6a7888"/><rect x="20" y="6" width="6" height="0.7" fill="#6a7888"/><rect x="22" y="7" width="0.8" height="7" fill="#6a7888"/><rect x="28" y="4" width="0.8" height="11" fill="#5a6878"/><rect x="24" y="10" width="3" height="0.7" fill="#7a8898"/><rect x="19" y="18" width="4" height="2" fill="#6a7888"/><rect x="27" y="20" width="3" height="3" fill="#e8eef2"/><rect x="3.5" y="26" width="42" height="13" fill="#ffffff" stroke="#3a3a3a" stroke-width="0.9"/><rect x="4.5" y="31" width="1" height="2" fill="#505050"/><rect x="43.5" y="31" width="1" height="2" fill="#505050"/><rect x="8" y="39.3" width="33" height="1.6" fill="#404040"/></svg>
<div class="a" style="left:1.00px;top:91.30px;width:57px;height:56.4px;background:#fff;border:2px solid #c6c6c6;"></div>
<div class="t" style="left:60.00px;top:113.50px;font-size:6.5px;line-height:6.5px;color:#0a0a0a;letter-spacing:-0.2px">CE824</div>
<div class="t" style="left:60.00px;top:120.70px;font-size:6.5px;line-height:6.5px;color:#9a9a9a;letter-spacing:-0.1px;font-size:6.15px">Тип устройства</div>
<svg class="a" style="left:6.00px;top:101.00px" width="46" height="36" viewBox="0 0 46 36"><rect x="3" y="1" width="41" height="33" rx="1.5" fill="#e2e0d8" stroke="#c8c6bc" stroke-width="0.6"/><rect x="38" y="2" width="5.5" height="31" fill="#ecebe6"/><rect x="0.8" y="9" width="5" height="17" rx="1" fill="#a0a0a0"/><rect x="2" y="11" width="2.6" height="13" fill="#707070"/><rect x="8" y="4" width="31" height="28" fill="#f8f8f6"/><path d="M10 5.5L14 9.5M10 9.5L13 6" stroke="#404040" stroke-width="1"/><rect x="16" y="5" width="22" height="1" fill="#808080"/><rect x="16" y="7.3" width="22" height="1" fill="#909090"/><rect x="16" y="9.6" width="22" height="1" fill="#909090"/><rect x="11" y="14.5" width="13" height="0.9" fill="#8a8a8a"/><rect x="11" y="20.5" width="9" height="0.9" fill="#8a8a8a"/><rect x="25" y="20.5" width="5" height="0.9" fill="#8a8a8a"/><rect x="9" y="13" width="1" height="12" fill="#b0b0b0"/><rect x="14" y="27" width="22" height="1" fill="#7a7a7a"/></svg>
<div class="a" style="left:120.00px;top:91.30px;width:57px;height:56.4px;background:#fff;border:2px solid #c6c6c6;"></div>
<div class="t" style="left:179.00px;top:113.50px;font-size:6.5px;line-height:6.5px;color:#0a0a0a;letter-spacing:-0.2px">CE826M</div>
<div class="t" style="left:179.00px;top:120.70px;font-size:6.5px;line-height:6.5px;color:#9a9a9a;letter-spacing:-0.1px;font-size:6.15px">Тип устройства</div>
<svg class="a" style="left:127.00px;top:96.00px" width="46" height="48" viewBox="0 0 46 48"><rect x="1" y="1" width="40" height="46" fill="#dedcd4" stroke="#cac8be" stroke-width="0.6"/><rect x="1" y="1" width="40" height="15" fill="#e4e2da"/><rect x="7" y="1" width="0.8" height="46" fill="#cfcdc4"/><rect x="23" y="2" width="0.8" height="14" fill="#c8c6bc"/><rect x="34" y="1" width="0.8" height="46" fill="#cfcdc4"/><rect x="10" y="16.5" width="34" height="15" fill="#eeede8" stroke="#cac8c0" stroke-width="0.5"/><rect x="10" y="16.5" width="34" height="1.6" fill="#98a4cc"/><rect x="11.5" y="21.5" width="20" height="6" fill="#c4c4b8" stroke="#8c8c80" stroke-width="0.5"/><rect x="33" y="28" width="9.5" height="1.8" fill="#707070"/><rect x="35" y="21" width="6" height="4" fill="#e0e0da" stroke="#b8b8b0" stroke-width="0.4"/><rect x="23" y="33" width="0.8" height="14" fill="#c8c6bc"/></svg>
<div class="a" style="left:1.00px;top:154.00px;width:57px;height:56.4px;background:#fff;border:2px solid #c6c6c6;"></div>
<div class="t" style="left:60.00px;top:176.20px;font-size:6.5px;line-height:6.5px;color:#0a0a0a;letter-spacing:-0.2px">CE901</div>
<div class="t" style="left:60.00px;top:183.40px;font-size:6.5px;line-height:6.5px;color:#9a9a9a;letter-spacing:-0.1px;font-size:6.15px">Тип устройства</div>
<svg class="a" style="left:7.00px;top:156.00px" width="46" height="51" viewBox="0 0 46 51"><rect x="2" y="1" width="26" height="44" fill="#e8e8e4" stroke="#d0d0c8" stroke-width="0.5"/><rect x="6" y="3" width="13" height="6" fill="#c8d8b8" stroke="#a0a898" stroke-width="0.5"/><rect x="4" y="12" width="16" height="6" fill="#dce6ee"/><rect x="20" y="14" width="4" height="2" fill="#505050"/><rect x="2" y="23" width="26" height="1" fill="#d0d0c8"/><rect x="9" y="25" width="12" height="3" fill="#f4f4f0" stroke="#c8c8c0" stroke-width="0.4"/><rect x="15.5" y="31.5" width="29" height="18" rx="1.2" fill="#ebe9e4" stroke="#d2d0c8" stroke-width="0.6"/><rect x="19" y="35.5" width="11" height="4" fill="#b0b0a8" stroke="#808078" stroke-width="0.4"/></svg>
<svg class="a" style="left:120px;top:154.00px" width="57" height="56"><defs><filter id="bl" x="0" y="0" width="1" height="1"><feGaussianBlur stdDeviation="0.5"/></filter><clipPath id="cp"><rect width="57" height="56"/></clipPath></defs><g clip-path="url(#cp)"><rect width="57" height="56" fill="#5aaaf2"/><g filter="url(#bl)"><circle cx="-0.45" cy="0.05" r="1.8" fill="#2a7ed6"/><circle cx="3.70" cy="0.05" r="1.35" fill="#f2f9ff"/><circle cx="7.85" cy="0.05" r="1.8" fill="#2a7ed6"/><circle cx="12.00" cy="0.05" r="1.35" fill="#f2f9ff"/><circle cx="16.15" cy="0.05" r="1.8" fill="#2a7ed6"/><circle cx="20.30" cy="0.05" r="1.35" fill="#f2f9ff"/><circle cx="24.45" cy="0.05" r="1.8" fill="#2a7ed6"/><circle cx="28.60" cy="0.05" r="1.35" fill="#f2f9ff"/><circle cx="32.75" cy="0.05" r="1.8" fill="#2a7ed6"/><circle cx="36.90" cy="0.05" r="1.35" fill="#f2f9ff"/><circle cx="41.05" cy="0.05" r="1.8" fill="#2a7ed6"/><circle cx="45.20" cy="0.05" r="1.35" fill="#f2f9ff"/><circle cx="49.35" cy="0.05" r="1.8" fill="#2a7ed6"/><circle cx="53.50" cy="0.05" r="1.35" fill="#f2f9ff"/><circle cx="57.65" cy="0.05" r="1.8" fill="#2a7ed6"/><circle cx="61.80" cy="0.05" r="1.35" fill="#f2f9ff"/><circle cx="-0.45" cy="4.20" r="1.35" fill="#f2f9ff"/><circle cx="3.70" cy="4.20" r="1.8" fill="#2a7ed6"/><circle cx="7.85" cy="4.20" r="1.35" fill="#f2f9ff"/><circle cx="12.00" cy="4.20" r="1.8" fill="#2a7ed6"/><circle cx="16.15" cy="4.20" r="1.35" fill="#f2f9ff"/><circle cx="20.30" cy="4.20" r="1.8" fill="#2a7ed6"/><circle cx="24.45" cy="4.20" r="1.35" fill="#f2f9ff"/><circle cx="28.60" cy="4.20" r="1.8" fill="#2a7ed6"/><circle cx="32.75" cy="4.20" r="1.35" fill="#f2f9ff"/><circle cx="36.90" cy="4.20" r="1.8" fill="#2a7ed6"/><circle cx="41.05" cy="4.20" r="1.35" fill="#f2f9ff"/><circle cx="45.20" cy="4.20" r="1.8" fill="#2a7ed6"/><circle cx="49.35" cy="4.20" r="1.35" fill="#f2f9ff"/><circle cx="53.50" cy="4.20" r="1.8" fill="#2a7ed6"/><circle cx="57.65" cy="4.20" r="1.35" fill="#f2f9ff"/><circle cx="61.80" cy="4.20" r="1.8" fill="#2a7ed6"/><circle cx="-0.45" cy="8.35" r="1.8" fill="#2a7ed6"/><circle cx="3.70" cy="8.35" r="1.35" fill="#f2f9ff"/><circle cx="7.85" cy="8.35" r="1.8" fill="#2a7ed6"/><circle cx="12.00" cy="8.35" r="1.35" fill="#f2f9ff"/><circle cx="16.15" cy="8.35" r="1.8" fill="#2a7ed6"/><circle cx="20.30" cy="8.35" r="1.35" fill="#f2f9ff"/><circle cx="24.45" cy="8.35" r="1.8" fill="#2a7ed6"/><circle cx="28.60" cy="8.35" r="1.35" fill="#f2f9ff"/><circle cx="32.75" cy="8.35" r="1.8" fill="#2a7ed6"/><circle cx="36.90" cy="8.35" r="1.35" fill="#f2f9ff"/><circle cx="41.05" cy="8.35" r="1.8" fill="#2a7ed6"/><circle cx="45.20" cy="8.35" r="1.35" fill="#f2f9ff"/><circle cx="49.35" cy="8.35" r="1.8" fill="#2a7ed6"/><circle cx="53.50" cy="8.35" r="1.35" fill="#f2f9ff"/><circle cx="57.65" cy="8.35" r="1.8" fill="#2a7ed6"/><circle cx="61.80" cy="8.35" r="1.35" fill="#f2f9ff"/><circle cx="-0.45" cy="12.50" r="1.35" fill="#f2f9ff"/><circle cx="3.70" cy="12.50" r="1.8" fill="#2a7ed6"/><circle cx="7.85" cy="12.50" r="1.35" fill="#f2f9ff"/><circle cx="12.00" cy="12.50" r="1.8" fill="#2a7ed6"/><circle cx="16.15" cy="12.50" r="1.35" fill="#f2f9ff"/><circle cx="20.30" cy="12.50" r="1.8" fill="#2a7ed6"/><circle cx="24.45" cy="12.50" r="1.35" fill="#f2f9ff"/><circle cx="28.60" cy="12.50" r="1.8" fill="#2a7ed6"/><circle cx="32.75" cy="12.50" r="1.35" fill="#f2f9ff"/><circle cx="36.90" cy="12.50" r="1.8" fill="#2a7ed6"/><circle cx="41.05" cy="12.50" r="1.35" fill="#f2f9ff"/><circle cx="45.20" cy="12.50" r="1.8" fill="#2a7ed6"/><circle cx="49.35" cy="12.50" r="1.35" fill="#f2f9ff"/><circle cx="53.50" cy="12.50" r="1.8" fill="#2a7ed6"/><circle cx="57.65" cy="12.50" r="1.35" fill="#f2f9ff"/><circle cx="61.80" cy="12.50" r="1.8" fill="#2a7ed6"/><circle cx="-0.45" cy="16.65" r="1.8" fill="#2a7ed6"/><circle cx="3.70" cy="16.65" r="1.35" fill="#f2f9ff"/><circle cx="7.85" cy="16.65" r="1.8" fill="#2a7ed6"/><circle cx="12.00" cy="16.65" r="1.35" fill="#f2f9ff"/><circle cx="16.15" cy="16.65" r="1.8" fill="#2a7ed6"/><circle cx="20.30" cy="16.65" r="1.35" fill="#f2f9ff"/><circle cx="24.45" cy="16.65" r="1.8" fill="#2a7ed6"/><circle cx="28.60" cy="16.65" r="1.35" fill="#f2f9ff"/><circle cx="32.75" cy="16.65" r="1.8" fill="#2a7ed6"/><circle cx="36.90" cy="16.65" r="1.35" fill="#f2f9ff"/><circle cx="41.05" cy="16.65" r="1.8" fill="#2a7ed6"/><circle cx="45.20" cy="16.65" r="1.35" fill="#f2f9ff"/><circle cx="49.35" cy="16.65" r="1.8" fill="#2a7ed6"/><circle cx="53.50" cy="16.65" r="1.35" fill="#f2f9ff"/><circle cx="57.65" cy="16.65" r="1.8" fill="#2a7ed6"/><circle cx="61.80" cy="16.65" r="1.35" fill="#f2f9ff"/><circle cx="-0.45" cy="20.80" r="1.35" fill="#f2f9ff"/><circle cx="3.70" cy="20.80" r="1.8" fill="#2a7ed6"/><circle cx="7.85" cy="20.80" r="1.35" fill="#f2f9ff"/><circle cx="12.00" cy="20.80" r="1.8" fill="#2a7ed6"/><circle cx="16.15" cy="20.80" r="1.35" fill="#f2f9ff"/><circle cx="20.30" cy="20.80" r="1.8" fill="#2a7ed6"/><circle cx="24.45" cy="20.80" r="1.35" fill="#f2f9ff"/><circle cx="28.60" cy="20.80" r="1.8" fill="#2a7ed6"/><circle cx="32.75" cy="20.80" r="1.35" fill="#f2f9ff"/><circle cx="36.90" cy="20.80" r="1.8" fill="#2a7ed6"/><circle cx="41.05" cy="20.80" r="1.35" fill="#f2f9ff"/><circle cx="45.20" cy="20.80" r="1.8" fill="#2a7ed6"/><circle cx="49.35" cy="20.80" r="1.35" fill="#f2f9ff"/><circle cx="53.50" cy="20.80" r="1.8" fill="#2a7ed6"/><circle cx="57.65" cy="20.80" r="1.35" fill="#f2f9ff"/><circle cx="61.80" cy="20.80" r="1.8" fill="#2a7ed6"/><circle cx="-0.45" cy="24.95" r="1.8" fill="#2a7ed6"/><circle cx="3.70" cy="24.95" r="1.35" fill="#f2f9ff"/><circle cx="7.85" cy="24.95" r="1.8" fill="#2a7ed6"/><circle cx="12.00" cy="24.95" r="1.35" fill="#f2f9ff"/><circle cx="16.15" cy="24.95" r="1.8" fill="#2a7ed6"/><circle cx="20.30" cy="24.95" r="1.35" fill="#f2f9ff"/><circle cx="24.45" cy="24.95" r="1.8" fill="#2a7ed6"/><circle cx="28.60" cy="24.95" r="1.35" fill="#f2f9ff"/><circle cx="32.75" cy="24.95" r="1.8" fill="#2a7ed6"/><circle cx="36.90" cy="24.95" r="1.35" fill="#f2f9ff"/><circle cx="41.05" cy="24.95" r="1.8" fill="#2a7ed6"/><circle cx="45.20" cy="24.95" r="1.35" fill="#f2f9ff"/><circle cx="49.35" cy="24.95" r="1.8" fill="#2a7ed6"/><circle cx="53.50" cy="24.95" r="1.35" fill="#f2f9ff"/><circle cx="57.65" cy="24.95" r="1.8" fill="#2a7ed6"/><circle cx="61.80" cy="24.95" r="1.35" fill="#f2f9ff"/><circle cx="-0.45" cy="29.10" r="1.35" fill="#f2f9ff"/><circle cx="3.70" cy="29.10" r="1.8" fill="#2a7ed6"/><circle cx="7.85" cy="29.10" r="1.35" fill="#f2f9ff"/><circle cx="12.00" cy="29.10" r="1.8" fill="#2a7ed6"/><circle cx="16.15" cy="29.10" r="1.35" fill="#f2f9ff"/><circle cx="20.30" cy="29.10" r="1.8" fill="#2a7ed6"/><circle cx="24.45" cy="29.10" r="1.35" fill="#f2f9ff"/><circle cx="28.60" cy="29.10" r="1.8" fill="#2a7ed6"/><circle cx="32.75" cy="29.10" r="1.35" fill="#f2f9ff"/><circle cx="36.90" cy="29.10" r="1.8" fill="#2a7ed6"/><circle cx="41.05" cy="29.10" r="1.35" fill="#f2f9ff"/><circle cx="45.20" cy="29.10" r="1.8" fill="#2a7ed6"/><circle cx="49.35" cy="29.10" r="1.35" fill="#f2f9ff"/><circle cx="53.50" cy="29.10" r="1.8" fill="#2a7ed6"/><circle cx="57.65" cy="29.10" r="1.35" fill="#f2f9ff"/><circle cx="61.80" cy="29.10" r="1.8" fill="#2a7ed6"/><circle cx="-0.45" cy="33.25" r="1.8" fill="#2a7ed6"/><circle cx="3.70" cy="33.25" r="1.35" fill="#f2f9ff"/><circle cx="7.85" cy="33.25" r="1.8" fill="#2a7ed6"/><circle cx="12.00" cy="33.25" r="1.35" fill="#f2f9ff"/><circle cx="16.15" cy="33.25" r="1.8" fill="#2a7ed6"/><circle cx="20.30" cy="33.25" r="1.35" fill="#f2f9ff"/><circle cx="24.45" cy="33.25" r="1.8" fill="#2a7ed6"/><circle cx="28.60" cy="33.25" r="1.35" fill="#f2f9ff"/><circle cx="32.75" cy="33.25" r="1.8" fill="#2a7ed6"/><circle cx="36.90" cy="33.25" r="1.35" fill="#f2f9ff"/><circle cx="41.05" cy="33.25" r="1.8" fill="#2a7ed6"/><circle cx="45.20" cy="33.25" r="1.35" fill="#f2f9ff"/><circle cx="49.35" cy="33.25" r="1.8" fill="#2a7ed6"/><circle cx="53.50" cy="33.25" r="1.35" fill="#f2f9ff"/><circle cx="57.65" cy="33.25" r="1.8" fill="#2a7ed6"/><circle cx="61.80" cy="33.25" r="1.35" fill="#f2f9ff"/><circle cx="-0.45" cy="37.40" r="1.35" fill="#f2f9ff"/><circle cx="3.70" cy="37.40" r="1.8" fill="#2a7ed6"/><circle cx="7.85" cy="37.40" r="1.35" fill="#f2f9ff"/><circle cx="12.00" cy="37.40" r="1.8" fill="#2a7ed6"/><circle cx="16.15" cy="37.40" r="1.35" fill="#f2f9ff"/><circle cx="20.30" cy="37.40" r="1.8" fill="#2a7ed6"/><circle cx="24.45" cy="37.40" r="1.35" fill="#f2f9ff"/><circle cx="28.60" cy="37.40" r="1.8" fill="#2a7ed6"/><circle cx="32.75" cy="37.40" r="1.35" fill="#f2f9ff"/><circle cx="36.90" cy="37.40" r="1.8" fill="#2a7ed6"/><circle cx="41.05" cy="37.40" r="1.35" fill="#f2f9ff"/><circle cx="45.20" cy="37.40" r="1.8" fill="#2a7ed6"/><circle cx="49.35" cy="37.40" r="1.35" fill="#f2f9ff"/><circle cx="53.50" cy="37.40" r="1.8" fill="#2a7ed6"/><circle cx="57.65" cy="37.40" r="1.35" fill="#f2f9ff"/><circle cx="61.80" cy="37.40" r="1.8" fill="#2a7ed6"/><circle cx="-0.45" cy="41.55" r="1.8" fill="#2a7ed6"/><circle cx="3.70" cy="41.55" r="1.35" fill="#f2f9ff"/><circle cx="7.85" cy="41.55" r="1.8" fill="#2a7ed6"/><circle cx="12.00" cy="41.55" r="1.35" fill="#f2f9ff"/><circle cx="16.15" cy="41.55" r="1.8" fill="#2a7ed6"/><circle cx="20.30" cy="41.55" r="1.35" fill="#f2f9ff"/><circle cx="24.45" cy="41.55" r="1.8" fill="#2a7ed6"/><circle cx="28.60" cy="41.55" r="1.35" fill="#f2f9ff"/><circle cx="32.75" cy="41.55" r="1.8" fill="#2a7ed6"/><circle cx="36.90" cy="41.55" r="1.35" fill="#f2f9ff"/><circle cx="41.05" cy="41.55" r="1.8" fill="#2a7ed6"/><circle cx="45.20" cy="41.55" r="1.35" fill="#f2f9ff"/><circle cx="49.35" cy="41.55" r="1.8" fill="#2a7ed6"/><circle cx="53.50" cy="41.55" r="1.35" fill="#f2f9ff"/><circle cx="57.65" cy="41.55" r="1.8" fill="#2a7ed6"/><circle cx="61.80" cy="41.55" r="1.35" fill="#f2f9ff"/><circle cx="-0.45" cy="45.70" r="1.35" fill="#f2f9ff"/><circle cx="3.70" cy="45.70" r="1.8" fill="#2a7ed6"/><circle cx="7.85" cy="45.70" r="1.35" fill="#f2f9ff"/><circle cx="12.00" cy="45.70" r="1.8" fill="#2a7ed6"/><circle cx="16.15" cy="45.70" r="1.35" fill="#f2f9ff"/><circle cx="20.30" cy="45.70" r="1.8" fill="#2a7ed6"/><circle cx="24.45" cy="45.70" r="1.35" fill="#f2f9ff"/><circle cx="28.60" cy="45.70" r="1.8" fill="#2a7ed6"/><circle cx="32.75" cy="45.70" r="1.35" fill="#f2f9ff"/><circle cx="36.90" cy="45.70" r="1.8" fill="#2a7ed6"/><circle cx="41.05" cy="45.70" r="1.35" fill="#f2f9ff"/><circle cx="45.20" cy="45.70" r="1.8" fill="#2a7ed6"/><circle cx="49.35" cy="45.70" r="1.35" fill="#f2f9ff"/><circle cx="53.50" cy="45.70" r="1.8" fill="#2a7ed6"/><circle cx="57.65" cy="45.70" r="1.35" fill="#f2f9ff"/><circle cx="61.80" cy="45.70" r="1.8" fill="#2a7ed6"/><circle cx="-0.45" cy="49.85" r="1.8" fill="#2a7ed6"/><circle cx="3.70" cy="49.85" r="1.35" fill="#f2f9ff"/><circle cx="7.85" cy="49.85" r="1.8" fill="#2a7ed6"/><circle cx="12.00" cy="49.85" r="1.35" fill="#f2f9ff"/><circle cx="16.15" cy="49.85" r="1.8" fill="#2a7ed6"/><circle cx="20.30" cy="49.85" r="1.35" fill="#f2f9ff"/><circle cx="24.45" cy="49.85" r="1.8" fill="#2a7ed6"/><circle cx="28.60" cy="49.85" r="1.35" fill="#f2f9ff"/><circle cx="32.75" cy="49.85" r="1.8" fill="#2a7ed6"/><circle cx="36.90" cy="49.85" r="1.35" fill="#f2f9ff"/><circle cx="41.05" cy="49.85" r="1.8" fill="#2a7ed6"/><circle cx="45.20" cy="49.85" r="1.35" fill="#f2f9ff"/><circle cx="49.35" cy="49.85" r="1.8" fill="#2a7ed6"/><circle cx="53.50" cy="49.85" r="1.35" fill="#f2f9ff"/><circle cx="57.65" cy="49.85" r="1.8" fill="#2a7ed6"/><circle cx="61.80" cy="49.85" r="1.35" fill="#f2f9ff"/><circle cx="-0.45" cy="54.00" r="1.35" fill="#f2f9ff"/><circle cx="3.70" cy="54.00" r="1.8" fill="#2a7ed6"/><circle cx="7.85" cy="54.00" r="1.35" fill="#f2f9ff"/><circle cx="12.00" cy="54.00" r="1.8" fill="#2a7ed6"/><circle cx="16.15" cy="54.00" r="1.35" fill="#f2f9ff"/><circle cx="20.30" cy="54.00" r="1.8" fill="#2a7ed6"/><circle cx="24.45" cy="54.00" r="1.35" fill="#f2f9ff"/><circle cx="28.60" cy="54.00" r="1.8" fill="#2a7ed6"/><circle cx="32.75" cy="54.00" r="1.35" fill="#f2f9ff"/><circle cx="36.90" cy="54.00" r="1.8" fill="#2a7ed6"/><circle cx="41.05" cy="54.00" r="1.35" fill="#f2f9ff"/><circle cx="45.20" cy="54.00" r="1.8" fill="#2a7ed6"/><circle cx="49.35" cy="54.00" r="1.35" fill="#f2f9ff"/><circle cx="53.50" cy="54.00" r="1.8" fill="#2a7ed6"/><circle cx="57.65" cy="54.00" r="1.35" fill="#f2f9ff"/><circle cx="61.80" cy="54.00" r="1.8" fill="#2a7ed6"/><circle cx="-0.45" cy="58.15" r="1.8" fill="#2a7ed6"/><circle cx="3.70" cy="58.15" r="1.35" fill="#f2f9ff"/><circle cx="7.85" cy="58.15" r="1.8" fill="#2a7ed6"/><circle cx="12.00" cy="58.15" r="1.35" fill="#f2f9ff"/><circle cx="16.15" cy="58.15" r="1.8" fill="#2a7ed6"/><circle cx="20.30" cy="58.15" r="1.35" fill="#f2f9ff"/><circle cx="24.45" cy="58.15" r="1.8" fill="#2a7ed6"/><circle cx="28.60" cy="58.15" r="1.35" fill="#f2f9ff"/><circle cx="32.75" cy="58.15" r="1.8" fill="#2a7ed6"/><circle cx="36.90" cy="58.15" r="1.35" fill="#f2f9ff"/><circle cx="41.05" cy="58.15" r="1.8" fill="#2a7ed6"/><circle cx="45.20" cy="58.15" r="1.35" fill="#f2f9ff"/><circle cx="49.35" cy="58.15" r="1.8" fill="#2a7ed6"/><circle cx="53.50" cy="58.15" r="1.35" fill="#f2f9ff"/><circle cx="57.65" cy="58.15" r="1.8" fill="#2a7ed6"/><circle cx="61.80" cy="58.15" r="1.35" fill="#f2f9ff"/><circle cx="-0.45" cy="62.30" r="1.35" fill="#f2f9ff"/><circle cx="3.70" cy="62.30" r="1.8" fill="#2a7ed6"/><circle cx="7.85" cy="62.30" r="1.35" fill="#f2f9ff"/><circle cx="12.00" cy="62.30" r="1.8" fill="#2a7ed6"/><circle cx="16.15" cy="62.30" r="1.35" fill="#f2f9ff"/><circle cx="20.30" cy="62.30" r="1.8" fill="#2a7ed6"/><circle cx="24.45" cy="62.30" r="1.35" fill="#f2f9ff"/><circle cx="28.60" cy="62.30" r="1.8" fill="#2a7ed6"/><circle cx="32.75" cy="62.30" r="1.35" fill="#f2f9ff"/><circle cx="36.90" cy="62.30" r="1.8" fill="#2a7ed6"/><circle cx="41.05" cy="62.30" r="1.35" fill="#f2f9ff"/><circle cx="45.20" cy="62.30" r="1.8" fill="#2a7ed6"/><circle cx="49.35" cy="62.30" r="1.35" fill="#f2f9ff"/><circle cx="53.50" cy="62.30" r="1.8" fill="#2a7ed6"/><circle cx="57.65" cy="62.30" r="1.35" fill="#f2f9ff"/><circle cx="61.80" cy="62.30" r="1.8" fill="#2a7ed6"/></g></g></svg>
<div class="t" style="left:179.00px;top:176.20px;font-size:6.5px;line-height:6.5px;color:#ffffff;letter-spacing:-0.22px">CE901RUP-02</div>
<div class="t" style="left:179.00px;top:183.40px;font-size:6.5px;line-height:6.5px;color:#ffffff;letter-spacing:-0.1px;font-size:6.15px">Тип устройства</div>
<div class="a" style="left:179.00px;top:174.80px;width:42px;height:14px;background:#1e78d4;"></div>
<div class="t" style="left:179.00px;top:176.20px;font-size:6.5px;line-height:6.5px;color:#ffffff;letter-spacing:-0.22px">CE901RUP-02</div>
<div class="t" style="left:179.00px;top:183.40px;font-size:6.5px;line-height:6.5px;color:#ffffff;letter-spacing:-0.1px;font-size:6.15px">Тип устройства</div>
<div class="a" style="left:125.00px;top:166.00px;width:42px;height:28px;background:rgba(90,130,170,0.25);border-radius:2px"></div>
<div class="a" style="left:130.00px;top:175.00px;width:19px;height:7px;background:rgba(20,90,170,0.55);"></div>
<div class="a" style="left:1.00px;top:216.70px;width:57px;height:56.4px;background:#fff;border:2px solid #c6c6c6;"></div>
<div class="t" style="left:60.00px;top:238.90px;font-size:6.5px;line-height:6.5px;color:#0a0a0a;letter-spacing:-0.2px">ATOM 1</div>
<div class="t" style="left:60.00px;top:246.10px;font-size:6.5px;line-height:6.5px;color:#9a9a9a;letter-spacing:-0.1px;font-size:6.15px">Тип устройства</div>
<svg class="a" style="left:15.00px;top:231.00px" width="30" height="39" viewBox="0 0 30 39"><rect x="1" y="1" width="26.5" height="36.5" fill="#f2f4f4" stroke="#d4d8d8" stroke-width="0.6"/><rect x="1" y="27" width="26.5" height="0.6" fill="#dde0e0"/><rect x="2" y="12.8" width="16.5" height="7" fill="#587868"/><rect x="3" y="14" width="14.5" height="4.6" fill="#7a9c8c"/><path d="M4 15.5H7M8 15.5H11M12 15.5H15M4 17.5H7M8 17.5H11M12 17.5H15" stroke="#c8e0d8" stroke-width="0.6"/><rect x="2" y="21" width="9" height="0.8" fill="#8a8a8a"/><rect x="20" y="14" width="4" height="2" fill="#a0a4a8"/><circle cx="25.3" cy="22" r="1.9" fill="#2a70c0"/><rect x="13" y="5" width="1" height="3" fill="#a0a0a0"/><rect x="11" y="30" width="6" height="0.7" fill="#b0b0b0"/></svg>
<div class="a" style="left:120.00px;top:216.70px;width:57px;height:56.4px;background:#fff;border:2px solid #c6c6c6;"></div>
<div class="t" style="left:179.00px;top:238.90px;font-size:6.5px;line-height:6.5px;color:#0a0a0a;letter-spacing:-0.2px">ATOM 3</div>
<div class="t" style="left:179.00px;top:246.10px;font-size:6.5px;line-height:6.5px;color:#9a9a9a;letter-spacing:-0.1px;font-size:6.15px">Тип устройства</div>
<svg class="a" style="left:123.00px;top:230.00px" width="49" height="40" viewBox="0 0 49 40"><rect x="2" y="1" width="45.5" height="38.5" fill="#eff1f1" stroke="#d4d8d8" stroke-width="0.6"/><rect x="2" y="26.5" width="45.5" height="0.7" fill="#d2d6d6"/><rect x="2" y="8" width="45.5" height="0.6" fill="#e0e4e4"/><rect x="6" y="13" width="20.5" height="7" fill="#587868"/><rect x="7" y="14.2" width="18.5" height="4.6" fill="#7a9c8c"/><path d="M8 15.5H12M13 15.5H17M18 15.5H22M8 17.5H12M13 17.5H17M18 17.5H22" stroke="#c8e0d8" stroke-width="0.6"/><circle cx="44" cy="13.8" r="2.2" fill="#2a70c0"/><rect x="32" y="11" width="6" height="1" fill="#707070"/><rect x="34" y="16" width="3" height="2.5" fill="#505050"/><rect x="35" y="22" width="10" height="1.4" fill="#8a8a8a"/><rect x="20" y="31" width="8" height="0.7" fill="#a8a8a8"/></svg>
<div class="a" style="left:1.00px;top:279.40px;width:57px;height:56.4px;background:#fff;border:2px solid #c6c6c6;"></div>
<div class="t" style="left:60.00px;top:298.00px;font-size:6.5px;line-height:6.5px;color:#0a0a0a;letter-spacing:-0.06px">УСПД 164-01M</div>
<div class="t" style="left:60.00px;top:305.20px;font-size:6.5px;line-height:6.5px;color:#0a0a0a;letter-spacing:-0.06px">(3.8b2 и выше)</div>
<div class="t" style="left:60.00px;top:312.40px;font-size:6.5px;line-height:6.5px;color:#9a9a9a;letter-spacing:-0.1px;font-size:6.15px">Тип устройства</div>
<svg class="a" style="left:15.00px;top:282.00px" width="28" height="53" viewBox="0 0 28 53"><rect x="0.5" y="0.5" width="26.5" height="52" rx="2.5" fill="#e6e2d8" stroke="#ccc8bc" stroke-width="0.6"/><rect x="1" y="1" width="4" height="51" fill="#dcd8cc"/><rect x="6" y="3" width="19" height="3" fill="#6a84c0"/><rect x="6" y="6.5" width="19" height="6.5" fill="#f6f6f8"/><rect x="8" y="8" width="8" height="2.5" fill="#a0a4b0"/><rect x="18" y="8" width="5" height="3" fill="#8a90a0"/><rect x="6" y="13" width="19" height="1.6" fill="#8098c8"/><rect x="6" y="15" width="19" height="36" fill="#f2f2ee"/><path d="M8 19H14M8 23H13M8 28H14M8 33H12M8 38H14M8 43H13M17 19H23M17 24H22M17 30H23M17 36H22M17 42H23" stroke="#b4b4b0" stroke-width="0.7"/></svg>
<div class="a" style="left:120.00px;top:279.40px;width:57px;height:56.4px;background:#fff;border:2px solid #c6c6c6;"></div>
<div class="t" style="left:179.00px;top:298.00px;font-size:6.5px;line-height:6.5px;color:#0a0a0a;letter-spacing:-0.06px">УСПД 164-01M</div>
<div class="t" style="left:179.00px;top:305.20px;font-size:6.5px;line-height:6.5px;color:#0a0a0a;letter-spacing:-0.2px">И/К1/К2</div>
<div class="t" style="left:179.00px;top:312.40px;font-size:6.5px;line-height:6.5px;color:#9a9a9a;letter-spacing:-0.1px;font-size:6.15px">Тип устройства</div>
<svg class="a" style="left:134.00px;top:282.00px" width="28" height="53" viewBox="0 0 28 53"><rect x="0.5" y="0.5" width="26.5" height="52" rx="2.5" fill="#e6e2d8" stroke="#ccc8bc" stroke-width="0.6"/><rect x="1" y="1" width="4" height="51" fill="#dcd8cc"/><rect x="6" y="3" width="19" height="3" fill="#6a84c0"/><rect x="6" y="6.5" width="19" height="6.5" fill="#f6f6f8"/><rect x="8" y="8" width="8" height="2.5" fill="#a0a4b0"/><rect x="18" y="8" width="5" height="3" fill="#8a90a0"/><rect x="6" y="13" width="19" height="1.6" fill="#8098c8"/><rect x="6" y="15" width="19" height="36" fill="#f2f2ee"/><path d="M8 19H14M8 23H13M8 28H14M8 33H12M8 38H14M8 43H13M17 19H23M17 24H22M17 30H23M17 36H22M17 42H23" stroke="#b4b4b0" stroke-width="0.7"/></svg>
</div>
<div class="a" style="left:472px;top:81px;width:9px;height:335px;background:#f0f0f0;"></div>
<div class="a" style="left:472px;top:265px;width:9px;height:80px;background:#cdcdcd;"></div>
<svg class="a" style="left:473px;top:85px" width="7" height="5" viewBox="0 0 7 5"><path d="M1 4L3.5 1.5L6 4" stroke="#404040" stroke-width="1.25" fill="none"/></svg>
<svg class="a" style="left:473px;top:408px" width="7" height="5" viewBox="0 0 7 5"><path d="M1 1L3.5 3.5L6 1" stroke="#404040" stroke-width="1.25" fill="none"/></svg>
<div class="a" style="left:481px;top:81px;width:1px;height:335px;background:#8a8a8a;"></div>
<div class="a" style="left:221px;top:416px;width:458px;height:1px;background:#a0a0a0;"></div>
<div class="a" style="left:9px;top:416px;width:209px;height:1px;background:#e6e6e6;"></div>
<div class="a" style="left:482px;top:81px;width:197px;height:335px;background:#f0f0f0;"></div>
<div class="t" style="left:485.8px;top:85.07px;font-size:7.0px;line-height:7.0px;color:#080808;">Монитор обмена</div>
<div class="a" style="left:484px;top:96px;width:195px;height:320px;background:#fff;border-left:1px solid #9a9a9a;border-top:1px solid #9a9a9a"></div>
<svg class="a" style="left:624px;top:82px" width="13" height="12" viewBox="0 0 13 12"><path d="M3.5 0.8H9.5L12 3.3V11.3H3.5Z" fill="#f4f4f4" stroke="#8a8a8a" stroke-width="0.8"/><rect x="1" y="3.5" width="7.5" height="7.5" fill="#7c84d8"/><rect x="2.5" y="4.3" width="4.5" height="2.4" fill="#f0f0fa"/><rect x="3" y="8" width="3.5" height="3" fill="#4a4a90"/></svg>
<svg class="a" style="left:639px;top:82px" width="11" height="12" viewBox="0 0 11 12"><path d="M1 0.8H7L10 3.8V11.3H1Z" fill="#f8f8f8" stroke="#8a8a8a" stroke-width="0.8"/><path d="M7 0.8V3.8H10" fill="none" stroke="#8a8a8a" stroke-width="0.6"/></svg>
<svg class="a" style="left:652px;top:82px" width="12" height="12" viewBox="0 0 12 12"><rect x="1" y="2" width="3" height="8" fill="#909090"/><rect x="6.5" y="0.5" width="2" height="9" fill="#505050"/><path d="M6 4L7.2 6.3L9.8 5.4L9 8L11.5 9.2L9 10.2L9.6 11.8L7 11L5.5 11.8L5 10L2.5 9.5L5 8.2L4.2 5.5Z" fill="#f0c020"/></svg>
<svg class="a" style="left:667.5px;top:86px" width="7" height="6" viewBox="0 0 7 6"><path d="M0.8 0.5L6.2 5.5M6.2 0.5L0.8 5.5" stroke="#101010" stroke-width="1.05"/></svg>
<div class="t" style="left:11.4px;top:420.91px;font-size:6.6px;line-height:6.6px;color:#080808;">Разделы: 41</div>
<svg class="a" style="left:670px;top:420px" width="8" height="9" viewBox="0 0 8 9"><g fill="#909090"><rect x="6" y="2" width="1.1" height="1.1"/><rect x="6" y="4" width="1.1" height="1.1"/><rect x="6" y="6.4" width="1.1" height="1.1"/><rect x="3.9" y="4" width="1.1" height="1.1"/><rect x="3.9" y="6.4" width="1.1" height="1.1"/><rect x="1.6" y="6.4" width="1.1" height="1.1"/></g></svg>
</body></html>
